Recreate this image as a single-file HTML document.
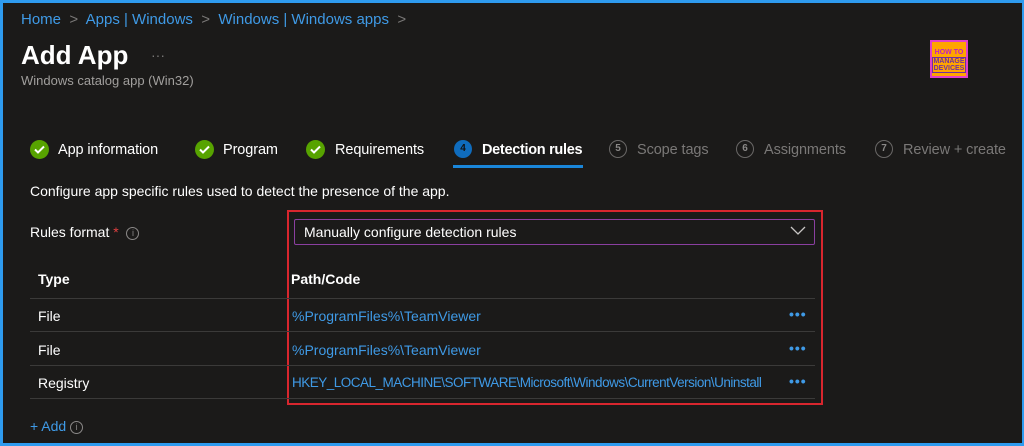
<!DOCTYPE html>
<html><head><style>
*{margin:0;padding:0;box-sizing:border-box}
body{width:1024px;height:446px;background:#1b1a19;font-family:"Liberation Sans",sans-serif;position:relative;overflow:hidden;color:#fff}
.frame{position:absolute;left:0;top:0;width:1024px;height:446px;border:3px solid #2e9bef;border-right-width:2px}
.a{position:absolute;white-space:nowrap}
.blue{color:#3f9ae6}
.grey{color:#7a7877}
.chk{position:absolute;width:19px;height:19px;border-radius:50%;background:#57a300}
.chk svg{position:absolute;left:4px;top:5px}
.num{position:absolute;width:18px;height:18px;border-radius:50%;border:1.5px solid #6a6867;color:#8a8887;font-size:10px;text-align:center;line-height:15px;font-weight:bold}
.line{position:absolute;left:30px;width:785px;height:1px;background:#3b3a39}
.dots{position:absolute;left:789px;color:#3f9ae6;font-size:14px;letter-spacing:1px;font-weight:bold}
.t{font-size:14.5px;letter-spacing:-0.1px}
</style></head><body>
<div class="frame"></div>
<div class="a blue" style="left:21px;top:11px;font-size:15px">Home <span class="grey">&nbsp;&gt;&nbsp;</span> Apps | Windows <span class="grey">&nbsp;&gt;&nbsp;</span> Windows | Windows apps <span class="grey">&nbsp;&gt;</span></div>
<div class="a" style="left:21px;top:40px;font-size:26px;font-weight:bold">Add App</div>
<div class="a grey" style="left:151px;top:47px;font-size:14px">···</div>
<div class="a" style="left:21px;top:73px;font-size:13px;color:#a19f9d">Windows catalog app (Win32)</div>
<div class="a" style="left:930px;top:40px;width:38px;height:38px;background:#ffa500;border:2px solid #e040c8;font-size:7px;color:#c020c0;text-align:center;line-height:9px;font-weight:bold;padding-top:6px">HOW TO<br><span style="color:#7030a0;border:1px solid #7030a0;display:inline-block;line-height:7px">MANAGE<br>DEVICES</span></div>

<div class="chk" style="left:30px;top:140px"><svg width="11" height="9" viewBox="0 0 11 9"><path d="M1 4.5L4 7.5L10 1.5" stroke="#fff" stroke-width="2" fill="none"/></svg></div>
<div class="a t" style="left:58px;top:142px">App information</div>
<div class="chk" style="left:195px;top:140px"><svg width="11" height="9" viewBox="0 0 11 9"><path d="M1 4.5L4 7.5L10 1.5" stroke="#fff" stroke-width="2" fill="none"/></svg></div>
<div class="a t" style="left:223px;top:142px">Program</div>
<div class="chk" style="left:306px;top:140px"><svg width="11" height="9" viewBox="0 0 11 9"><path d="M1 4.5L4 7.5L10 1.5" stroke="#fff" stroke-width="2" fill="none"/></svg></div>
<div class="a t" style="left:335px;top:142px">Requirements</div>
<div class="a" style="left:454px;top:140px;width:18px;height:18px;border-radius:50%;background:#0f6cbd;color:#111;font-size:10px;font-weight:bold;text-align:center;line-height:18px">4</div>
<div class="a t" style="left:482px;top:142px;font-weight:bold;letter-spacing:-0.3px">Detection rules</div>
<div class="a" style="left:453px;top:165px;width:130px;height:3px;background:#1a86d9"></div>
<div class="num" style="left:609px;top:140px">5</div>
<div class="a grey t" style="left:637px;top:142px">Scope tags</div>
<div class="num" style="left:736px;top:140px">6</div>
<div class="a grey t" style="left:764px;top:142px">Assignments</div>
<div class="num" style="left:875px;top:140px">7</div>
<div class="a grey t" style="left:903px;top:142px">Review + create</div>

<div class="a" style="left:30px;top:183px;font-size:14px">Configure app specific rules used to detect the presence of the app.</div>
<div class="a" style="left:30px;top:224px;font-size:14px">Rules format <span style="color:#e04040">*</span> &nbsp;<span style="display:inline-block;width:13px;height:13px;border:1px solid #8a8887;border-radius:50%;font-size:9px;text-align:center;line-height:11px;color:#8a8887;vertical-align:1px">i</span></div>
<div class="a" style="left:287px;top:210px;width:536px;height:195px;border:2px solid #d8262e"></div>
<div class="a" style="left:294px;top:219px;width:521px;height:26px;border:1px solid #8a3fa0;border-radius:2px"></div>
<div class="a" style="left:304px;top:224px;font-size:14px">Manually configure detection rules</div>
<svg class="a" style="left:790px;top:226px" width="16" height="10" viewBox="0 0 16 10"><path d="M1 1L8 8L15 1" stroke="#c8c6c4" stroke-width="1.3" fill="none"/></svg>
<div class="a" style="left:38px;top:271px;font-size:14px;font-weight:bold">Type</div>
<div class="a" style="left:291px;top:271px;font-size:14px;font-weight:bold">Path/Code</div>
<div class="line" style="top:298px"></div>
<div class="line" style="top:331px"></div>
<div class="line" style="top:365px"></div>
<div class="line" style="top:398px"></div>
<div class="a" style="left:38px;top:308px;font-size:14px">File</div>
<div class="a blue" style="left:292px;top:308px;font-size:14px">%ProgramFiles%\TeamViewer</div>
<div class="dots" style="top:306px">•••</div>
<div class="a" style="left:38px;top:342px;font-size:14px">File</div>
<div class="a blue" style="left:292px;top:342px;font-size:14px">%ProgramFiles%\TeamViewer</div>
<div class="dots" style="top:340px">•••</div>
<div class="a" style="left:38px;top:375px;font-size:14px">Registry</div>
<div class="a blue" style="left:292px;top:375px;font-size:13.5px;width:488px;overflow:hidden;text-overflow:ellipsis;letter-spacing:-0.5px">HKEY_LOCAL_MACHINE\SOFTWARE\Microsoft\Windows\CurrentVersion\Uninstall</div>
<div class="dots" style="top:373px">•••</div>
<div class="a blue" style="left:30px;top:418px;font-size:14px">+ Add <span style="display:inline-block;width:13px;height:13px;border:1px solid #8a8887;border-radius:50%;font-size:9px;text-align:center;line-height:11px;color:#8a8887;vertical-align:1px">i</span></div>
</body></html>
